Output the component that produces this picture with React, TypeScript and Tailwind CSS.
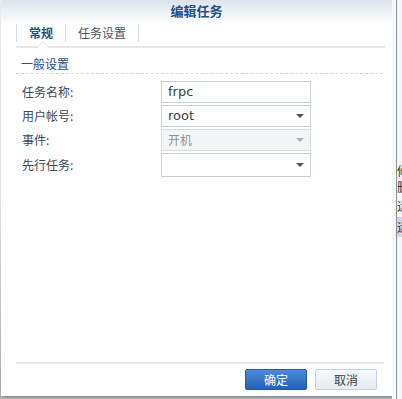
import React from "react";

const cjk = { fontFamily: '"Noto Sans CJK SC", "Noto Sans", sans-serif' };
const latin = { fontFamily: '"DejaVu Sans", "Noto Sans CJK SC", sans-serif' };

function Caret({ disabled }: { disabled?: boolean }) {
  return (
    <svg width="8" height="4" viewBox="0 0 8 4" className="shrink-0">
      <path d="M0 0 H8 L4 4 Z" fill={disabled ? "#a9b0b8" : "#4f545a"} />
    </svg>
  );
}

function Row({
  label,
  children,
  h = "h-[22px]",
}: {
  label: string;
  children: React.ReactNode;
  h?: string;
}) {
  return (
    <div className={`flex items-center ${h}`}>
      <div className="w-[145px] pl-[6px] text-[12px] text-[#3b4856]" style={cjk}>
        {label}
      </div>
      {children}
    </div>
  );
}

export default function App() {
  return (
    <div className="flex w-[402px] h-[399px] bg-[#b9bcc0] overflow-hidden">
      <div className="w-px h-full bg-gradient-to-b from-[#eef1f4] via-[#e3e5e8] to-[#a9acb0] shrink-0" />
      <div className="flex flex-col w-[391px] h-[396px] bg-white shadow-[2px_1px_3px_rgba(0,0,0,0.4)] shrink-0">
        {/* Title */}
        <div
          className="h-[22px] flex items-center justify-center bg-gradient-to-b from-[#dbe4ed] to-[#fbfcfd] text-[13px] font-bold text-[#1f4f88]"
          style={cjk}
        >
          编辑任务
        </div>

        {/* Tabs */}
        <div className="ml-[15px] mr-[7px] mt-[2px] pb-[4px] border-b-2 border-[#e5e7e9] relative">
          <div className="flex h-[18px] items-center">
            <div className="h-full border-l border-[#d3dde8]" />
            <div
              className="h-full flex items-center px-[12px] border-r border-[#d3dde8] text-[12px] font-bold text-[#1f4f88]"
              style={cjk}
            >
              常规
            </div>
            <div
              className="h-full flex items-center px-[12px] border-r border-[#d3dde8] text-[12px] text-[#4a5663]"
              style={cjk}
            >
              任务设置
            </div>
          </div>
          <svg
            className="absolute left-[21px] bottom-[-2px]"
            width="12"
            height="7"
            viewBox="0 0 12 7"
          >
            <path d="M0 7 L6 1 L12 7 Z" fill="#fff" />
            <path d="M0 6.5 L6 0.8 L12 6.5" fill="none" stroke="#dfe2e5" strokeWidth="1" />
          </svg>
        </div>

        {/* Section heading */}
        <div className="ml-[15px] mr-[9px] mt-[9px] pb-[2px] border-b border-dashed border-[#c9d5e3]">
          <div className="pl-[5px] text-[12px] leading-[14px] text-[#1f4f88]" style={cjk}>
            一般设置
          </div>
        </div>

        {/* Form */}
        <div className="ml-[15px] mt-[7px] flex flex-col gap-[2px]">
          <Row label="任务名称:">
            <div className="w-[150px] h-[22px] border border-[#c4cfdb] flex items-center px-[6px] text-[13px] text-[#3a3f45]" style={latin}>
              frpc
            </div>
          </Row>
          <Row label="用户帐号:">
            <div className="w-[150px] h-[22px] border border-[#c4cfdb] flex items-center justify-between pl-[6px] pr-[6px] text-[13px] text-[#3a3f45]" style={latin}>
              <span>root</span>
              <Caret />
            </div>
          </Row>
          <Row label="事件:">
            <div className="w-[150px] h-[22px] border border-[#d2d9e1] bg-[#f4f5f7] flex items-center justify-between pl-[6px] pr-[6px] text-[12px] text-[#8a9099]" style={cjk}>
              <span>开机</span>
              <Caret disabled />
            </div>
          </Row>
          <Row label="先行任务:" h="h-[24px]">
            <div className="w-[150px] h-[24px] border border-[#c4cfdb] flex items-center justify-end pr-[6px]">
              <Caret />
            </div>
          </Row>
        </div>

        <div className="flex-1" />

        {/* Footer */}
        <div className="ml-[15px] mr-[8px] border-t-2 border-[#e6e7e8]" />
        <div className="flex justify-end gap-[8px] pr-[15px] pt-[5px] pb-[6px]">
          <button
            className="w-[62px] h-[21px] rounded-[2px] border border-[#1f58a6] bg-gradient-to-b from-[#4c8ad8] to-[#2462b5] text-white text-[12px] flex items-center justify-center"
            style={cjk}
          >
            确定
          </button>
          <button
            className="w-[62px] h-[21px] rounded-[2px] border border-[#c3cfdc] bg-gradient-to-b from-[#f7f9fb] to-[#e6ebf1] text-[#3a3f45] text-[12px] flex items-center justify-center"
            style={cjk}
          >
            取消
          </button>
        </div>
      </div>

      {/* Background behind dialog */}
      <div className="flex-1 flex bg-[#f4f6f8]">
        <div className="w-[4px]" />
        <div className="w-px bg-[#8d9298]" />
        <div className="flex-1 overflow-hidden">
          <div className="h-[163px]" />
          <div className="h-[16px] text-[12px] leading-[16px] text-[#333] whitespace-nowrap" style={cjk}>修改</div>
          <div className="h-[16px] text-[12px] leading-[16px] text-[#333] whitespace-nowrap" style={cjk}>删除</div>
          <div className="h-[22px] text-[12px] leading-[22px] text-[#333] whitespace-nowrap" style={cjk}>运行</div>
          <div className="h-[20px] bg-[#c9d7e8] text-[12px] leading-[20px] text-[#333] whitespace-nowrap" style={cjk}>运行</div>
        </div>
      </div>
    </div>
  );
}
